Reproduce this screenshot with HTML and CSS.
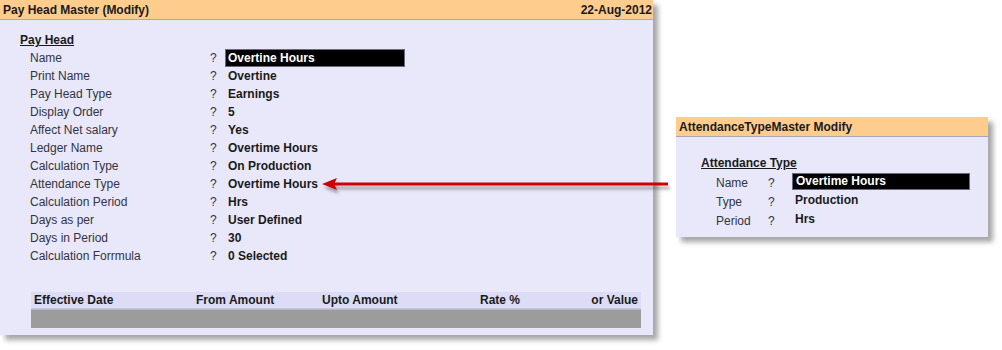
FILE: index.html
```html
<!DOCTYPE html>
<html>
<head>
<meta charset="utf-8">
<link rel="stylesheet" href="styles.css">
</head>
<body>
<div class="canvas">
  <div class="win main">
    <div class="titlebar">
      <span>Pay Head Master (Modify)</span>
      <span>22-Aug-2012</span>
    </div>
    <div class="main-body">
      <div class="section">Pay Head</div>
      <div class="rows">
        <div class="row"><span class="lbl">Name</span><span class="q">?</span><span class="val sel">Overtine Hours</span></div>
        <div class="row"><span class="lbl">Print Name</span><span class="q">?</span><span class="val">Overtine</span></div>
        <div class="row"><span class="lbl">Pay Head Type</span><span class="q">?</span><span class="val">Earnings</span></div>
        <div class="row"><span class="lbl">Display Order</span><span class="q">?</span><span class="val">5</span></div>
        <div class="row"><span class="lbl">Affect Net salary</span><span class="q">?</span><span class="val">Yes</span></div>
        <div class="row"><span class="lbl">Ledger Name</span><span class="q">?</span><span class="val">Overtime Hours</span></div>
        <div class="row"><span class="lbl">Calculation Type</span><span class="q">?</span><span class="val">On Production</span></div>
        <div class="row"><span class="lbl">Attendance Type</span><span class="q">?</span><span class="val">Overtime Hours</span></div>
        <div class="row"><span class="lbl">Calculation Period</span><span class="q">?</span><span class="val">Hrs</span></div>
        <div class="row"><span class="lbl">Days as per</span><span class="q">?</span><span class="val">User Defined</span></div>
        <div class="row"><span class="lbl">Days in Period</span><span class="q">?</span><span class="val">30</span></div>
        <div class="row"><span class="lbl">Calculation Forrmula</span><span class="q">?</span><span class="val">0 Selected</span></div>
      </div>
      <div class="table">
        <div class="thead">
          <span>Effective Date</span>
          <span>From Amount</span>
          <span>Upto Amount</span>
          <span>Rate %</span>
          <span class="right">or Value</span>
        </div>
        <div class="tbar"></div>
      </div>
    </div>
  </div>

  <div class="win att">
    <div class="titlebar">
      <span>AttendanceTypeMaster Modify</span>
    </div>
    <div class="att-body">
      <div class="section">Attendance Type</div>
      <div class="arow"><span class="albl">Name</span><span class="aq">?</span><span class="aval sel">Overtime Hours</span></div>
      <div class="arow"><span class="albl">Type</span><span class="aq">?</span><span class="aval">Production</span></div>
      <div class="arow"><span class="albl">Period</span><span class="aq">?</span><span class="aval">Hrs</span></div>
    </div>
  </div>

  <svg class="arrow" width="360" height="24" viewBox="318 172 360 24">
    <defs>
      <filter id="sh" x="-5%" y="-50%" width="110%" height="250%">
        <feDropShadow dx="2" dy="4" stdDeviation="1.5" flood-color="#000" flood-opacity="0.3"/>
      </filter>
    </defs>
    <g filter="url(#sh)">
      <line x1="332" y1="184" x2="668" y2="184" stroke="#cc0000" stroke-width="3"/>
      <polygon points="322,184 337,178 334,184 337,190" fill="#cc0000"/>
    </g>
  </svg>
</div>
</body>
</html>
```

FILE: styles.css
```css
html, body {
  margin: 0;
  padding: 0;
  background: #ffffff;
}

.canvas {
  position: relative;
  width: 1002px;
  height: 350px;
  overflow: hidden;
  font-family: "Liberation Sans", Arial, sans-serif;
  font-size: 12px;
  color: #1a1a1a;
}

.win {
  position: absolute;
  background: #e8e8fa;
  box-shadow: 5px 5px 5px rgba(0, 0, 0, 0.35);
  display: flex;
  flex-direction: column;
}

.main {
  left: 0;
  top: 0;
  width: 653px;
  height: 335px;
}

.att {
  left: 676px;
  top: 117px;
  width: 312px;
  height: 120px;
}

.titlebar {
  height: 20px;
  background: #fecc8d;
  border-bottom: 1px solid #a8a8b0;
  display: flex;
  justify-content: space-between;
  align-items: center;
  padding: 0 1px 0 3px;
  font-weight: bold;
  font-size: 12px;
  color: #1a1a1a;
  box-sizing: border-box;
}

.main-body {
  padding: 11px 0 0 20px;
  display: flex;
  flex-direction: column;
}

.section {
  font-weight: bold;
  text-decoration: underline;
  line-height: 18px;
  height: 18px;
}

.rows {
  padding-left: 10px;
  display: flex;
  flex-direction: column;
}

.row {
  display: flex;
  height: 18px;
  line-height: 18px;
  align-items: center;
}

.lbl {
  width: 180px;
  color: #333344;
}

.q {
  width: 18px;
  color: #333344;
}

.val {
  font-weight: bold;
}

.val.sel {
  background: #000;
  color: #fff;
  width: 180px;
  height: 18px;
  margin-left: -3px;
  padding-left: 2px;
  border: 1px solid #6a6a7a;
  box-sizing: border-box;
  line-height: 16px;
}

.table {
  margin-top: 27px;
  margin-left: 11px;
  width: 610px;
}

.thead {
  display: grid;
  grid-template-columns: 162px 126px 158px 100px 1fr;
  height: 16px;
  line-height: 16px;
  background: #dcdcf6;
  font-weight: bold;
  padding: 0 3px;
  border-bottom: 1px solid #c8c8d8;
}

.thead .right {
  text-align: right;
}

.tbar {
  height: 18px;
  background: #9c9c9c;
  border-top: 1px solid #b8b8c8;
}

.att-body {
  padding: 17px 0 0 25px;
  display: flex;
  flex-direction: column;
}

.arow {
  display: flex;
  height: 19px;
  align-items: center;
}

.albl {
  width: 52px;
  padding-left: 15px;
  color: #333344;
  position: relative;
  top: 1px;
}

.aq {
  width: 24px;
  color: #333344;
  position: relative;
  top: 1px;
}

.aval {
  font-weight: bold;
  padding-left: 3px;
  line-height: 17px;
  height: 17px;
}

.aval.sel {
  background: #000;
  color: #fff;
  width: 178px;
  border: 1px solid #6a6a7a;
  box-sizing: border-box;
  line-height: 15px;
}

.arrow {
  position: absolute;
  left: 318px;
  top: 172px;
}
```
